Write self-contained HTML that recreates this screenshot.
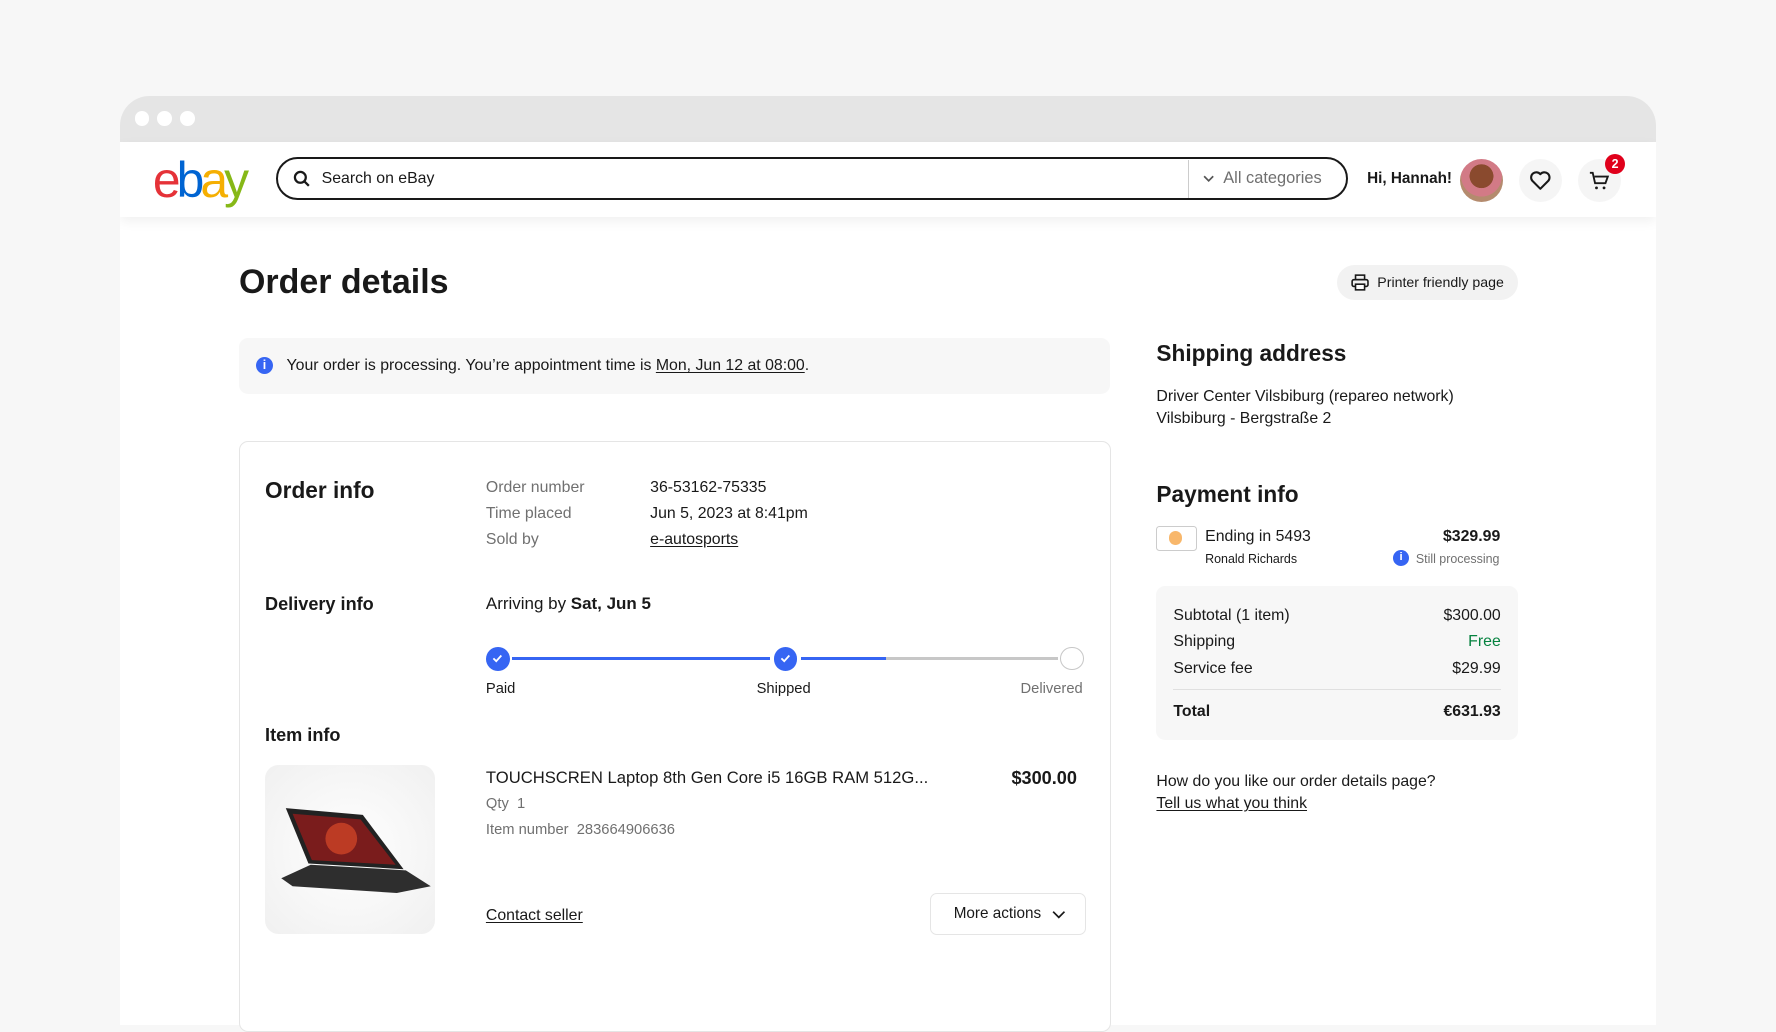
<!DOCTYPE html>
<html><head><meta charset="utf-8"><style>
html{zoom:1.13265}
body{margin:0;width:1568px;height:881px;background:#f7f7f7;font-family:"Liberation Sans",sans-serif;color:#191919;overflow:hidden;position:relative}
.a{position:absolute;white-space:nowrap}
.win{position:absolute;left:106px;top:85px;width:1356px;height:820px;background:#fff;border-radius:26px 26px 0 0;overflow:hidden}
.tb{position:absolute;left:0;top:0;width:100%;height:40px;background:#e5e5e5}
.dot{position:absolute;top:13px;width:13px;height:13px;border-radius:50%;background:#fff}
.hdr{position:absolute;left:0;top:40px;width:100%;height:67px;background:#fff;box-shadow:0 4px 10px rgba(0,0,0,.06)}
.g{color:#707070}
u{text-underline-offset:2px}
</style></head><body>
<div class="win">
 <div class="tb"><div class="dot" style="left:13px"></div><div class="dot" style="left:33px"></div><div class="dot" style="left:53px"></div></div>
 <div class="hdr">
  <div class="a" style="left:29px;top:8px;font-size:44px;letter-spacing:-3.5px;font-weight:400"><span style="color:#e53238">e</span><span style="color:#0064d2">b</span><span style="color:#f5af02">a</span><span style="color:#86b817">y</span></div>
  <div class="a" style="left:138px;top:14px;width:943px;height:34px;border:2px solid #191919;border-radius:20px"></div>
  <svg class="a" style="left:153px;top:25px" width="16" height="16" viewBox="0 0 16 16"><circle cx="6.5" cy="6.5" r="4.8" fill="none" stroke="#191919" stroke-width="2"/><path d="M10 10l4 4" stroke="#191919" stroke-width="2"/></svg>
  <div class="a" style="left:178px;top:25px;font-size:14px">Search on eBay</div>
  <div class="a" style="left:943px;top:16px;width:1px;height:34px;background:#ccc"></div>
  <svg class="a" style="left:956px;top:29px" width="10" height="8"><path d="M1 2l4 4 4-4" fill="none" stroke="#555" stroke-width="1.5"/></svg>
  <div class="a g" style="left:974px;top:24px;font-size:14.5px">All categories</div>
  <div class="a" style="left:1101px;top:25px;font-size:13.5px;font-weight:700">Hi, Hannah!</div>
  <div class="a" style="left:1183px;top:15px;width:38px;height:38px;border-radius:50%;background:radial-gradient(circle at 50% 40%,#8a4a2e 0 35%,#d27a86 36% 60%,#b48b6e 61%)"></div>
  <div class="a" style="left:1235px;top:15px;width:38px;height:38px;border-radius:50%;background:#f5f5f5"></div>
  <svg class="a" style="left:1244px;top:24px" width="20" height="20" viewBox="0 0 24 24"><path d="M12 21l-8.5-8.5A5 5 0 0 1 12 5.5a5 5 0 0 1 8.5 7z" fill="none" stroke="#191919" stroke-width="2.2" stroke-linejoin="round"/></svg>
  <div class="a" style="left:1287px;top:15px;width:38px;height:38px;border-radius:50%;background:#f5f5f5"></div>
  <svg class="a" style="left:1296px;top:24px" width="20" height="20" viewBox="0 0 24 24"><path d="M2 4h3l2.5 11h11L21 8H7" fill="none" stroke="#191919" stroke-width="2"/><circle cx="9" cy="20" r="1.5" fill="#191919"/><circle cx="17" cy="20" r="1.5" fill="#191919"/></svg>
  <div class="a" style="left:1311px;top:11px;width:18px;height:18px;border-radius:50%;background:#e0001b;color:#fff;font-size:11px;font-weight:700;text-align:center;line-height:18px">2</div>
 </div>
</div>
<div class="a" style="left:211px;top:232px;font-size:30px;font-weight:700">Order details</div>
<div class="a" style="left:1180px;top:234px;width:160px;height:31px;border-radius:16px;background:#f2f2f2"></div>
<svg class="a" style="left:1193px;top:242px" width="16" height="15" viewBox="0 0 16 15"><rect x="4" y="1" width="8" height="4" fill="none" stroke="#191919" stroke-width="1.4"/><rect x="1" y="5" width="14" height="6" rx="1.5" fill="none" stroke="#191919" stroke-width="1.4"/><rect x="4" y="9" width="8" height="5" fill="#fff" stroke="#191919" stroke-width="1.4"/></svg>
<div class="a" style="left:1216px;top:242px;font-size:12.5px">Printer friendly page</div>
<div class="a" style="left:211px;top:298px;width:769px;height:50px;border-radius:8px;background:#f7f7f7"></div>
<div class="a" style="left:226px;top:315px;width:15px;height:15px;border-radius:50%;background:#3665f3;color:#fff;font-size:11px;font-weight:700;text-align:center;line-height:15px">i</div>
<div class="a" style="left:253px;top:315px;font-size:14px">Your order is processing. You’re appointment time is <u>Mon, Jun 12 at 08:00</u>.</div>
<div class="a" style="left:211px;top:389px;width:768px;height:520px;border:1px solid #e5e5e5;border-radius:8px;background:#fff"></div>
<div class="a" style="left:234px;top:421px;font-size:20px;font-weight:700">Order info</div>
<div class="a g" style="left:429px;top:419px;font-size:14px;line-height:23px">Order number<br>Time placed<br>Sold by</div>
<div class="a" style="left:574px;top:419px;font-size:14px;line-height:23px">36-53162-75335<br>Jun 5, 2023 at 8:41pm<br><u>e-autosports</u></div>
<div class="a" style="left:234px;top:524px;font-size:16px;font-weight:700">Delivery info</div>
<div class="a" style="left:429px;top:524px;font-size:15px">Arriving by <b>Sat, Jun 5</b></div>
<div class="a" style="left:452px;top:580px;width:228px;height:3px;background:#3665f3"></div>
<div class="a" style="left:707px;top:580px;width:227px;height:3px;background:#c7c7c7"></div>
<div class="a" style="left:707px;top:580px;width:75px;height:3px;background:#3665f3"></div>
<div class="a" style="left:429px;top:571px;width:21px;height:21px;border-radius:50%;background:#3665f3"></div>
<div class="a" style="left:683px;top:571px;width:21px;height:21px;border-radius:50%;background:#3665f3"></div>
<svg class="a" style="left:433px;top:575px" width="13" height="13"><path d="M3 6.5l2.5 2.5 4.5-5" fill="none" stroke="#fff" stroke-width="1.6"/></svg>
<svg class="a" style="left:687px;top:575px" width="13" height="13"><path d="M3 6.5l2.5 2.5 4.5-5" fill="none" stroke="#fff" stroke-width="1.6"/></svg>
<div class="a" style="left:936px;top:571px;width:19px;height:19px;border-radius:50%;border:1.5px solid #c7c7c7;background:#fff"></div>
<div class="a" style="left:429px;top:601px;font-size:13px">Paid</div>
<div class="a" style="left:668px;top:601px;font-size:13px">Shipped</div>
<div class="a g" style="left:901px;top:601px;font-size:13px">Delivered</div>
<div class="a" style="left:234px;top:640px;font-size:16px;font-weight:700">Item info</div>
<div class="a" style="left:234px;top:675px;width:150px;height:150px;border-radius:12px;background:radial-gradient(circle at 50% 50%,#fff,#f0f0f0)"></div>
<svg class="a" style="left:246px;top:705px" width="136" height="86" viewBox="0 0 136 86"><path d="M6 8l68 6 36 48-84 -5z" fill="#222"/><path d="M12 13l60 5 31 40-74-4z" fill="#7a1c1c"/><circle cx="55" cy="35" r="14" fill="#e8502a" opacity=".6"/><path d="M2 70l26-12 84 5 22 14-30 6-92-6z" fill="#2e2e2e"/></svg>
<div class="a" style="left:429px;top:678px;font-size:14.7px">TOUCHSCREN Laptop 8th Gen Core i5 16GB RAM 512G...</div>
<div class="a" style="left:893px;top:678px;font-size:16px;font-weight:700">$300.00</div>
<div class="a g" style="left:429px;top:703px;font-size:13px">Qty&nbsp;&nbsp;1</div>
<div class="a g" style="left:429px;top:726px;font-size:13px">Item number&nbsp;&nbsp;283664906636</div>
<div class="a" style="left:429px;top:801px;font-size:14px"><u>Contact seller</u></div>
<div class="a" style="left:821px;top:788px;width:136px;height:36px;border:1px solid #e5e5e5;border-radius:6px;background:#fff"></div>
<div class="a" style="left:842px;top:799px;font-size:13.5px">More actions</div>
<svg class="a" style="left:929px;top:803px" width="12" height="8"><path d="M1 1.5l5 5 5-5" fill="none" stroke="#191919" stroke-width="1.5"/></svg>
<div class="a" style="left:1021px;top:300px;font-size:20px;font-weight:700">Shipping address</div>
<div class="a" style="left:1021px;top:341px;font-size:14px;line-height:19px">Driver Center Vilsbiburg (repareo network)<br>Vilsbiburg - Bergstraße 2</div>
<div class="a" style="left:1021px;top:425px;font-size:20px;font-weight:700">Payment info</div>
<div class="a" style="left:1021px;top:464px;width:34px;height:21px;border:1px solid #ccc;border-radius:3px;background:#fff"></div>
<div class="a" style="left:1032px;top:469px;width:12px;height:12px;border-radius:50%;background:#f8b76b"></div>
<div class="a" style="left:1064px;top:466px;font-size:14px">Ending in 5493</div>
<div class="a" style="left:1064px;top:487px;font-size:11px">Ronald Richards</div>
<div class="a" style="left:1274px;top:466px;font-size:14px;font-weight:700">$329.99</div>
<div class="a" style="left:1230px;top:486px;width:14px;height:14px;border-radius:50%;background:#3665f3;color:#fff;font-size:10px;font-weight:700;text-align:center;line-height:14px">i</div>
<div class="a g" style="left:1250px;top:487px;font-size:11px">Still processing</div>
<div class="a" style="left:1021px;top:517px;width:319px;height:136px;border-radius:8px;background:#f7f7f7"></div>
<div class="a" style="left:1036px;top:532px;font-size:14px;line-height:23.5px">Subtotal (1 item)<br>Shipping<br>Service fee</div>
<div class="a" style="left:1220px;width:105px;text-align:right;top:532px;font-size:14px;line-height:23.5px">$300.00<br><span style="color:#05823f">Free</span><br>$29.99</div>
<div class="a" style="left:1036px;top:608px;width:289px;height:1px;background:#e0e0e0"></div>
<div class="a" style="left:1036px;top:621px;font-size:14px;font-weight:700">Total</div>
<div class="a" style="left:1220px;width:105px;text-align:right;top:621px;font-size:14px;font-weight:700">€631.93</div>
<div class="a" style="left:1021px;top:681px;font-size:14px;line-height:19px">How do you like our order details page?<br><u>Tell us what you think</u></div>
</body></html>
